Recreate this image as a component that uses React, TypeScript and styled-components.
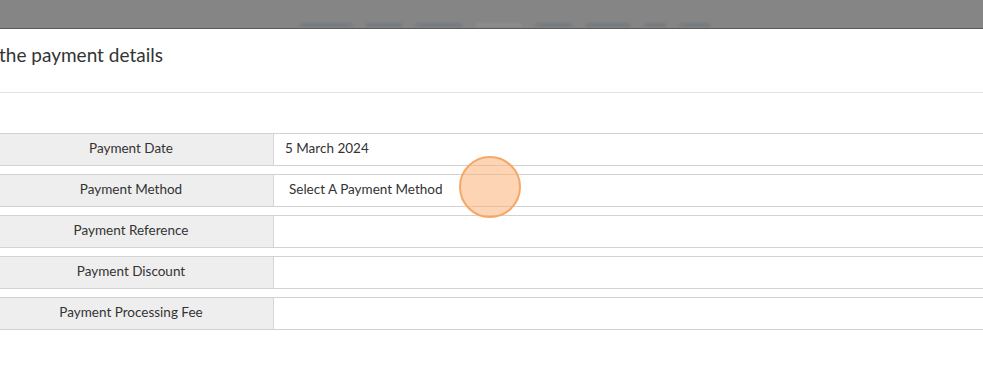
import React from "react"
import styled, { createGlobalStyle } from "styled-components"

const GlobalStyle = createGlobalStyle`
	html, body {
		margin: 0;
		padding: 0;
		background: #ffffff;
		overflow: hidden;
	}
	body {
		font-family: Lato, "Noto Sans", sans-serif;
		color: #333333;
	}
`

const Page = styled.div`
	width: 983px;
	height: 366px;
	display: flex;
	flex-direction: column;
	overflow: hidden;
`

// dimmed page behind the modal
const Backdrop = styled.div`
	height: 28px;
	flex: none;
	background: #858585;
	display: flex;
	align-items: flex-end;
	gap: 14px;
	padding: 0 0 1px 300px;
	box-sizing: border-box;
	overflow: hidden;
`

const Smudge = styled.div<{ w: number; light?: boolean }>`
	width: ${(p) => p.w}px;
	height: 4px;
	background: ${(p) => (p.light ? "#8e8e8e" : "#767a7f")};
	filter: blur(1.5px);
	flex: none;
`

const Modal = styled.div`
	flex: 1;
	background: #ffffff;
	border-top: 1px solid #5a5a5a;
	display: flex;
	flex-direction: column;
`

const Header = styled.div`
	height: 63px;
	border-bottom: 1px solid #e2e2e2;
	display: flex;
	align-items: center;
	flex: none;
`

const Title = styled.h2`
	margin: 0;
	margin-left: -1px;
	font-size: 19px;
	font-weight: 400;
	color: #333333;
	padding-bottom: 12px;
`

const Form = styled.div`
	display: flex;
	flex-direction: column;
	gap: 8px;
	padding-top: 40px;
	margin-left: -11px;
`

const Row = styled.div`
	display: grid;
	grid-template-columns: 285px 1fr;
	height: 33px;
	border-top: 1px solid #d2d2d2;
	border-bottom: 1px solid #d2d2d2;
	box-sizing: border-box;
`

const Label = styled.div`
	background: #eeeeee;
	border-right: 1px solid #d6d6d6;
	display: flex;
	align-items: center;
	justify-content: center;
	font-size: 13.5px;
	color: #333333;
	padding-bottom: 3px;
`

const Value = styled.div<{ select?: boolean }>`
	display: flex;
	align-items: center;
	padding-left: ${(p) => (p.select ? 15 : 11)}px;
	padding-bottom: 3px;
	font-size: 13.5px;
	color: #333333;
`

const Click = styled.div`
	position: absolute;
	left: 459px;
	top: 156px;
	width: 58px;
	height: 58px;
	border-radius: 50%;
	background: rgba(251, 178, 120, 0.55);
	border: 2px solid #f6a766;
	pointer-events: none;
`

const fields: { label: string; value?: string; select?: boolean }[] = [
	{ label: "Payment Date", value: "5 March 2024" },
	{ label: "Payment Method", value: "Select A Payment Method", select: true },
	{ label: "Payment Reference" },
	{ label: "Payment Discount" },
	{ label: "Payment Processing Fee" },
]

export default function App() {
	return (
		<>
			<GlobalStyle />
			<Page>
				<Backdrop>
					<Smudge w={52} />
					<Smudge w={36} />
					<Smudge w={46} />
					<Smudge w={46} light />
					<Smudge w={36} />
					<Smudge w={44} />
					<Smudge w={22} />
					<Smudge w={30} />
				</Backdrop>
				<Modal>
					<Header>
						<Title>the payment details</Title>
					</Header>
					<Form>
						{fields.map((f) => (
							<Row key={f.label}>
								<Label>{f.label}</Label>
								<Value select={f.select}>{f.value}</Value>
							</Row>
						))}
					</Form>
				</Modal>
			</Page>
			<Click />
		</>
	)
}
